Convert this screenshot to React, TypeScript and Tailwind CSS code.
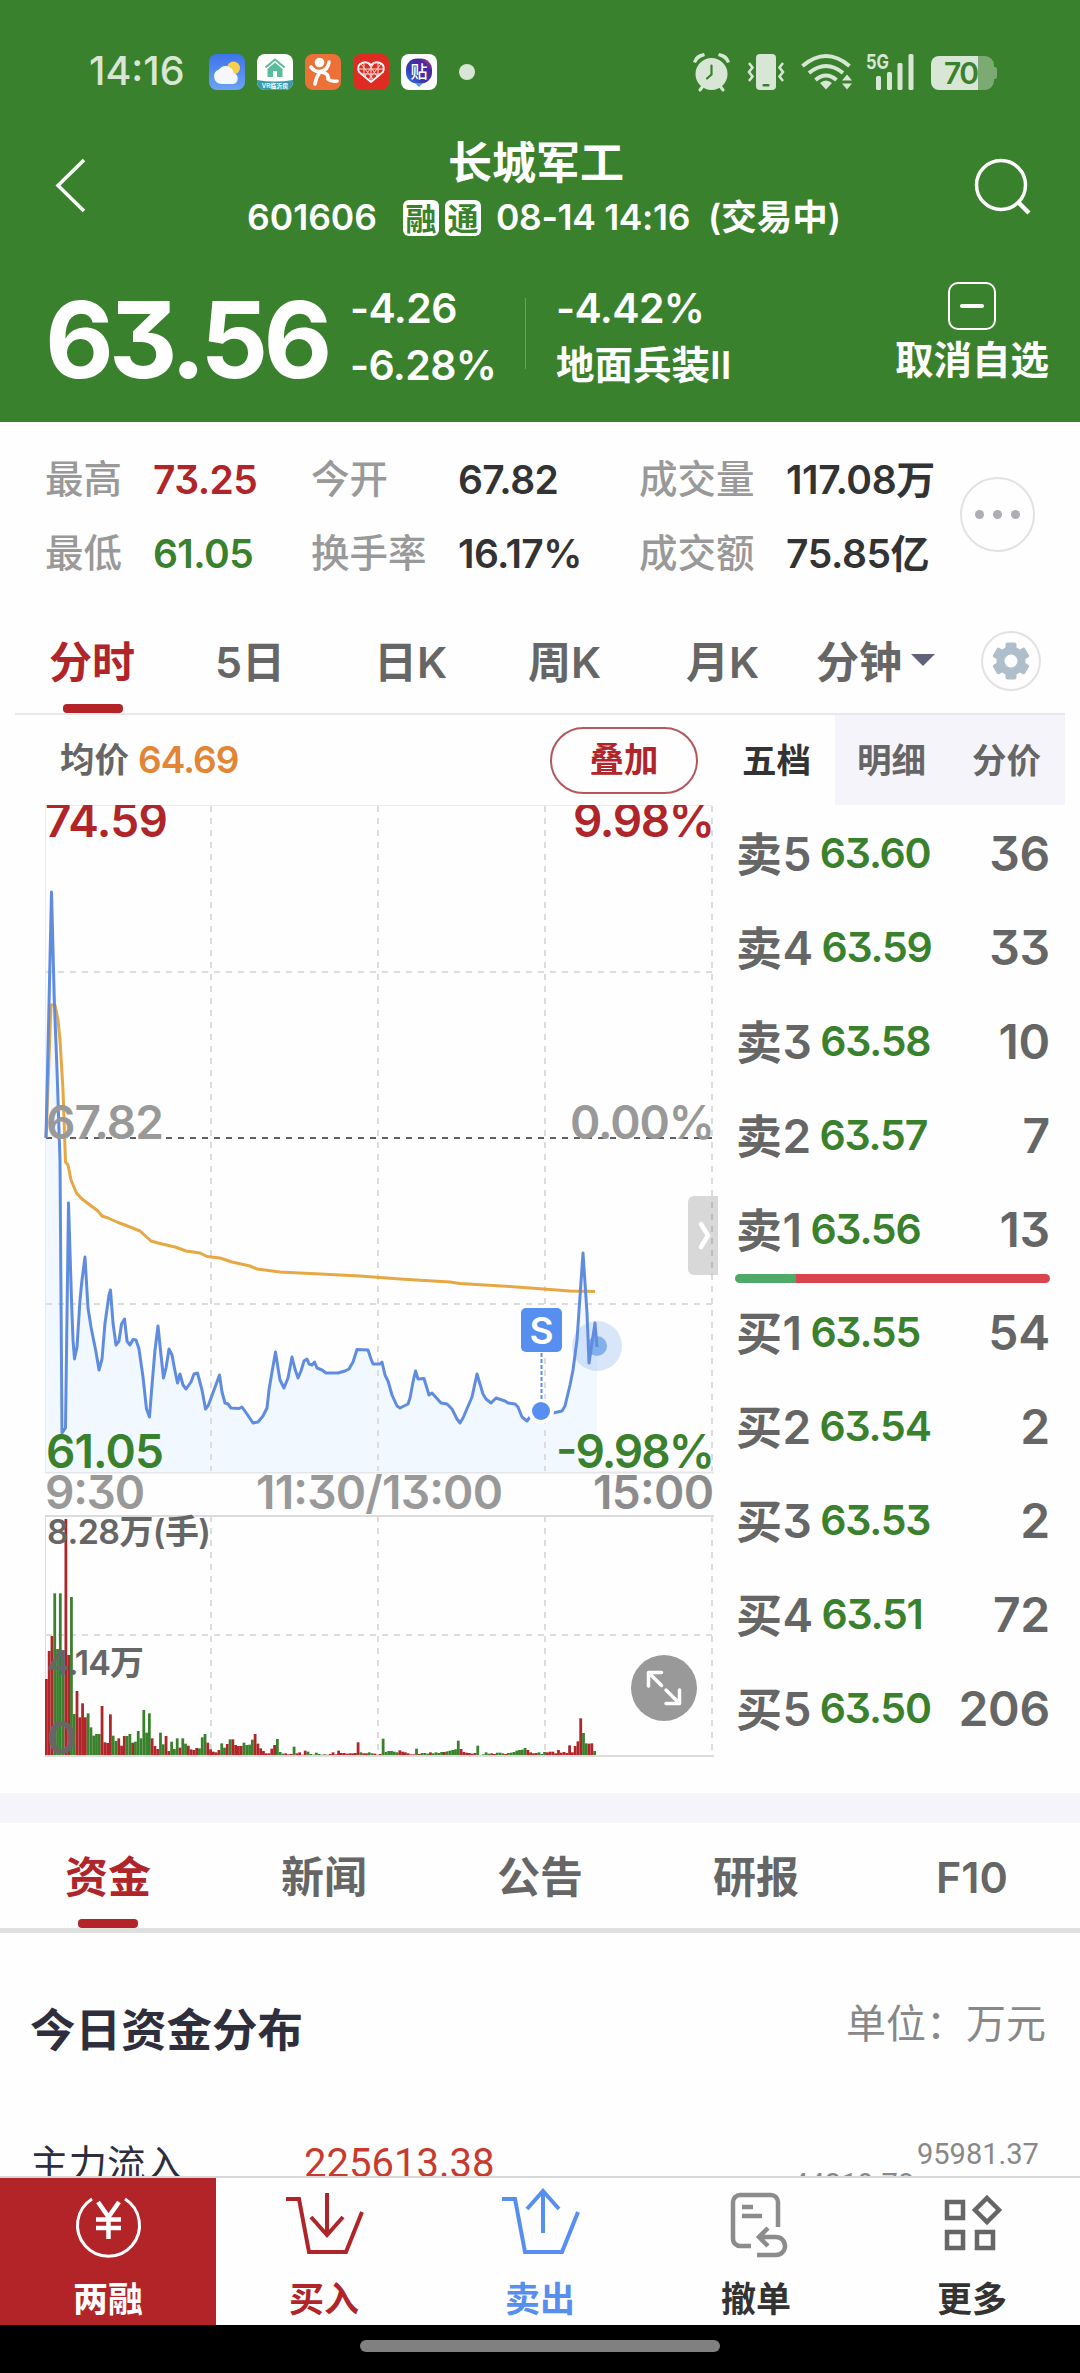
import React from 'react';

const AVG_LINE =
    '46,1138 51,1005 55,1005 58,1020 60,1040 63,1090 65.5,1162 68,1165 71,1180 76.5,1193 82,1199 90,1205 98,1211 102,1216 108,1218 117,1222 130,1227 140,1231 151,1241 158,1243 175,1247 186,1251 200,1253 207,1256.5 220,1258 232,1262 250,1266 257,1269 280,1272 320,1274 360,1276 400,1279 450,1282 460,1283.5 510,1286.5 530,1288 570,1291 595,1291.5';

const PRICE_LINE =
    '46,1138 51.5,892 54.3,1000 57,1070 60,1160 62,1433 65.5,1428 68.5,1203 71.5,1300 73,1340 74.5,1359 77,1347 80,1300 82,1280 85,1257 88,1308 91,1327 96,1352 99,1370 102,1359 105,1323 109,1295 110.5,1290 113,1323 116,1345 119,1341 121.5,1324 124.5,1319 127,1341 130,1345 133,1339.5 136,1340 139,1349 143,1377 146.5,1409 149.5,1417 152,1385 155,1350 158,1326 161,1355 163.5,1378 166,1368 169,1349 172,1355 175,1371 177.5,1383 180,1374 183,1385 186,1389 191,1382 194,1374 197.5,1373 202,1390 205.5,1409 208.5,1405 214,1390 219.5,1375 222,1392 225,1403 228,1404 231,1408 239,1408.5 242,1407 247,1414 253,1423 258,1422 263,1416 267,1408 269,1390 272,1372 275.5,1352 278,1368 280,1380 284,1388 288,1378 292,1357 295,1369 298,1378 301,1371 304,1361 307,1359 309,1364 312,1365 314.5,1362 317,1368 322,1370 326,1373 338,1373 345,1371 349,1369 353,1362 357,1349.5 368,1350 371,1359 373,1364 380,1364 382,1362 385,1375 388,1381 392,1395 397,1406 400,1408 408,1404 410,1398 413,1382 415.5,1371 418,1379 424,1378.5 429,1395 432,1393 441,1403 447,1404 452,1409 457,1419 460,1423 463,1418 472,1397 477,1374 483,1394 486,1399 491,1403 496,1398 505,1401 508,1403 515,1404 518,1407 522,1417 527,1421 530,1417 541,1411 553,1413 562,1411 565,1406 570,1385 573,1370 577,1340 583,1253 587,1313 589,1363 595,1323 597,1347';

// one value per minute, negative = falling minute (green)
const VOLUMES = [
    228, 312, 357, -485, -318, -485, -240, 708, 300, -474, -123, 192, 113, 155, 113, -125, -83, -58, -63, -63,
    147, 38, 36, 122, -58, -42, 50, 28, 57, -57, -63, 37, -40, -72, -50, -135, -67, -125, 50, 27,
    18, -67, -32, 57, 12, -40, -18, -50, 22, -50, -34, 28, 17, 15, 21, -20, -53, -63, 37, 17,
    10, 8, 15, -35, -22, 33, -47, 47, 30, 27, 27, -37, -30, -31, -46, 63, 34, 20, 12, 5,
    5, 19, 30, -48, -9, -4, 5, 2, 3, -25, 5, 8, 1, 13, -10, -3, -1, -7, -3, -1,
    2, -1, 3, 8, 2, 13, 6, 6, 4, 5, 5, 6, 38, -8, 5, 5, -8, -5, 4, 1,
    3, -49, -9, -12, -12, -10, -8, 14, 10, 8, 5, 2, 2, -19, 3, -6, -6, -4, 8, -5,
    -8, -6, -9, 9, -11, -13, -15, -17, -43, 18, 9, 7, 6, 4, 6, -28, 0, -2, -8, -4,
    5, 3, -7, -7, -5, 3, -6, -7, -9, -13, -15, -16, -21, 15, 8, 5, 6, -8, -3, -9,
    8, 10, 10, 5, 15, 7, 9, 6, 29, 8, 27, 41, 110, -66, -35, 34, 35, -12,
];

const STATS = [
    ['最高', '73.25', 'text-[#b0252a]', '今开', '67.82', '成交量', '117.08万'],
    ['最低', '61.05', 'text-[#3a812d]', '换手率', '16.17%', '成交额', '75.85亿'],
];

const SELLS = [
    ['卖5', '63.60', '36'],
    ['卖4', '63.59', '33'],
    ['卖3', '63.58', '10'],
    ['卖2', '63.57', '7'],
    ['卖1', '63.56', '13'],
];

const BUYS = [
    ['买1', '63.55', '54'],
    ['买2', '63.54', '2'],
    ['买3', '63.53', '2'],
    ['买4', '63.51', '72'],
    ['买5', '63.50', '206'],
];

const AppIcons = () => (
    <svg width="232" height="36" viewBox="0 0 232 36" className="shrink-0">
        <defs>
            <linearGradient id="sky" x1="0" y1="0" x2="0" y2="1">
                <stop offset="0" stopColor="#3d74ea" />
                <stop offset="1" stopColor="#6ea2f2" />
            </linearGradient>
            <linearGradient id="tie" x1="0" y1="1" x2="1" y2="0">
                <stop offset="0" stopColor="#2a8bea" />
                <stop offset="0.35" stopColor="#3a36b0" />
                <stop offset="0.75" stopColor="#4a2a9a" />
                <stop offset="1" stopColor="#f04a6a" />
            </linearGradient>
            <clipPath id="vr">
                <rect x="48" width="36" height="36" rx="8" />
            </clipPath>
        </defs>
        {/* weather */}
        <rect width="36" height="36" rx="8" fill="url(#sky)" />
        <circle cx="24.5" cy="14" r="6.5" fill="#f8cf4c" />
        <path d="M12 30a7.5 7.5 0 0 1-2-14.500a8 8 0 0 1 14.500 3.500a5.700 5.700 0 0 1 0 11z" fill="#f5f7fc" />
        {/* house */}
        <g clipPath="url(#vr)">
            <rect x="48" width="36" height="36" fill="#fff" />
            <path d="M48 26q18 3 36 0v10H48z" fill="#3a98a8" />
            <path d="M56.500 13.500 66 5.500l9.500 8" fill="none" stroke="#58bd98" strokeWidth="2" />
            <path d="M58.500 15 66 8.500l7.500 6.500V23h-5.500v-6h-4v6h-5.500z" fill="#58bd98" />
            <text x="66" y="34" fontSize="6" fill="#fff" textAnchor="middle">VR临沂房</text>
        </g>
        {/* runner */}
        <rect x="96" width="36" height="36" rx="8" fill="#ec7038" />
        <circle cx="110.500" cy="8.500" r="4.800" fill="#fff" />
        <path d="M102 13q3 5 9.500 4.500Q119 16 120 8M111 18q-4 5-5 12M112 18q8 1 7 7q3 3 9 2" fill="none" stroke="#fff" strokeWidth="3.600" strokeLinecap="round" />
        {/* heart knot */}
        <rect x="144" width="36" height="36" rx="8" fill="#df2c23" />
        <path d="M162 28 150 18q-2-5 1-8q6-4 11 1q5-5 11-1q3 3 1 8z" fill="none" stroke="#fff" strokeWidth="1.800" />
        <path d="M152 10l12 15M158 8l10 14M172 10l-12 15M166 8l-10 14M150 15h24M153 20h18M155 8v13M169 8v13M162 11v16" fill="none" stroke="#fbd9d4" strokeWidth="1" />
        {/* tie */}
        <rect x="192" width="36" height="36" rx="8" fill="#fff" />
        <rect x="197" y="4.500" width="26" height="25" rx="11" fill="url(#tie)" />
        <path d="M206 29l4 4 4-4z" fill="#3aa0f0" />
        <text x="210" y="23.500" fontSize="17" fontWeight="500" fill="#fff" textAnchor="middle">贴</text>
    </svg>
);

const SystemIcons = () => (
    <svg width="320" height="40" viewBox="690 52 320 40" className="shrink-0" fill="#d8e6d5">
        {/* alarm */}
        <circle cx="711.500" cy="74" r="16" />
        <path d="M693 62q2-8 11-9l1 3q-7 2-9 7zM730 62q-2-8-11-9l-1 3q7 2 9 7z" />
        <path d="M703 86l-3 4M720 86l3 4" stroke="#d8e6d5" strokeWidth="3" strokeLinecap="round" />
        <path d="M711.500 65.500v9l-4.500 4" fill="none" stroke="#3a812d" strokeWidth="2.200" strokeLinecap="round" />
        {/* vibrate */}
        <rect x="756" y="54" width="20" height="36" rx="4" />
        <rect x="762.500" y="84" width="7" height="2.500" rx="1" fill="#3a812d" />
        <path d="M749 63l3.500 4.500-3.500 4.500 3.500 4.500-3.500 4.500M783 63l-3.500 4.500 3.500 4.500-3.500 4.500 3.500 4.500" fill="none" stroke="#d8e6d5" strokeWidth="2.500" />
        {/* wifi */}
        <path d="M802.500 66q23.500-20 47 0M809 73q17-14 34 0M815.500 80q10.500-9 21 0" fill="none" stroke="#d8e6d5" strokeWidth="4" />
        <path d="M820 83q6-5 12 0l-6 6.500zM842 80.500l5-6 5 6zM842 83.500h10l-5 6z" />
        {/* signal */}
        <text x="866" y="68.500" fontSize="20" fontWeight="700" textLength="23" lengthAdjust="spacingAndGlyphs">5G</text>
        <rect x="876" y="76" width="5" height="14" rx="1.500" />
        <rect x="887" y="72" width="5" height="18" rx="1.500" />
        <rect x="897.500" y="63" width="5" height="27" rx="1.500" />
        <rect x="908.500" y="54" width="5" height="36" rx="1.500" />
        {/* battery */}
        <path d="M978 56h7a9 9 0 0 1 9 9v2h1q2 0 2 3v5q0 4-2 4h-1v2a9 9 0 0 1-9 9h-7z" fill="#7caa73" />
        <path d="M978 56h-39a8 8 0 0 0-8 8v18a8 8 0 0 0 8 8h39z" />
        <text x="944" y="84" fontSize="30" fontWeight="600" fill="#3a812d" textLength="35">70</text>
    </svg>
);

const Grid = ({ top, bottom }: { top: number; bottom: number }) => (
    <>
        {[211, 378, 545, 712].map((x) => (
            <line key={x} x1={x} x2={x} y1={top} y2={bottom} stroke="#dcdcdc" strokeWidth="2" strokeDasharray="6 6" />
        ))}
    </>
);

const Chart = () => (
    <svg width="720" height="960" viewBox="0 804 720 960" className="block">
        <path d="M45.500 1472V805.500H712" fill="none" stroke="#ebebeb" strokeWidth="1" />
        <path d="M45 1472.500H714" stroke="#e4e6ea" strokeWidth="2" />
        <polygon points={`46,1472 ${PRICE_LINE} 597,1472`} fill="#f2f8ff" />
        <Grid top={806} bottom={1471} />
        <path d="M46 972H712M46 1304H712" stroke="#dcdcdc" strokeWidth="2" strokeDasharray="6 6" />
        <path d="M46 1138H712" stroke="#606060" strokeWidth="2" strokeDasharray="6 6" />
        <polyline points={AVG_LINE} fill="none" stroke="#e7a843" strokeWidth="3" strokeLinejoin="round" />
        <circle cx="597" cy="1346" r="25" fill="#6aa1ea" fillOpacity="0.25" />
        <circle cx="597" cy="1346" r="10" fill="#83b0ec" />
        <polyline points={PRICE_LINE} fill="none" stroke="#608ce0" strokeWidth="3" strokeLinejoin="round" />

        {/* sell marker */}
        <circle cx="541" cy="1411" r="13" fill="#fff" />
        <circle cx="541" cy="1411" r="9" fill="#568ff0" />
        <path d="M541.500 1353v46" stroke="#568ff0" strokeWidth="2" strokeDasharray="4 2" />
        <rect x="521" y="1308" width="41" height="44" rx="5" fill="#568ff0" />
        <text x="541.500" y="1344" fontSize="37" fontWeight="600" fill="#fff" textAnchor="middle">S</text>

        {/* axis labels */}
        <g fontSize="46" fontWeight="600">
            <svg x="0" y="805" width="720" height="60" viewBox="0 805 720 60">
                <text x="45" y="837" fill="#b0252a" textLength="123">74.59</text>
                <text x="573" y="837" fill="#b0252a" textLength="142">9.98%</text>
            </svg>
            <text x="46" y="1139" fill="#999" textLength="118">67.82</text>
            <text x="570" y="1139" fill="#999" textLength="145">0.00%</text>
            <text x="46" y="1468" fill="#3a812d" textLength="118">61.05</text>
            <text x="556" y="1468" fill="#3a812d" textLength="159">-9.98%</text>
            <text x="45" y="1509" fill="#999" textLength="100">9:30</text>
            <text x="256" y="1509" fill="#999" textLength="247">11:30/13:00</text>
            <text x="593" y="1509" fill="#8c8c8c" textLength="121">15:00</text>
        </g>

        {/* side handle */}
        <path d="M718 1196h-24a6 6 0 0 0-6 6v67a6 6 0 0 0 6 6h24z" fill="#000" fillOpacity="0.150" />
        <path d="M701 1224l7 11.500-7 11.500" fill="none" stroke="#fff" strokeWidth="4.500" strokeLinecap="round" />

        {/* volume */}
        <path d="M45.500 1516V1756" stroke="#dcdcdc" strokeWidth="1" />
        <path d="M45 1516H714M45 1756H714" stroke="#dcdcdc" strokeWidth="2" />
        <Grid top={1516} bottom={1755} />
        <path d="M46 1635H712" stroke="#dcdcdc" strokeWidth="2" strokeDasharray="6 6" />
        {VOLUMES.map((v, i) => (
            <rect
                key={i}
                x={45 + i * 2.783}
                y={1755 - Math.abs(v) / 3}
                width="2.783"
                height={Math.abs(v) / 3}
                fill={v < 0 ? '#3a812d' : '#b02529'}
            />
        ))}
        <g fill="#666" fontSize="34" fontWeight="600">
            <text x="47" y="1543.500" textLength="164">8.28万(手)</text>
            <text x="47" y="1674.500" textLength="97">4.14万</text>
            <text x="47" y="1754" fontSize="45">0</text>
        </g>
        <circle cx="664" cy="1688" r="33" fill="#999" />
        <path d="M661.500 1685.500 648.500 1672.500M648.500 1686v-13.500h13M666 1690l13.500 13.500M679.500 1690v13.500h-13.500" fill="none" stroke="#fff" strokeWidth="3.500" strokeLinecap="round" strokeLinejoin="round" />
    </svg>
);

const BookRow = ({ row }: { row: string[] }) => (
    <div className="flex h-[94px] items-center text-[#666]">
        <span className="text-[46px] tracking-[0.01em]">{row[0]}</span>
        <span className="ml-[8px] text-[41px] tracking-[-0.03em] text-[#3a812d]">{row[1]}</span>
        <span className="ml-auto text-[48px] tracking-[-0.005em]">{row[2]}</span>
    </div>
);

const NAV = [
    {
        label: '两融',
        style: 'bg-[#b22428] text-white',
        labelStyle: '',
        icon: (
            <g strokeWidth="3">
                <path d="M17 9A31 31 0 1 0 50 9" />
                <path d="M23 12l10.500 15L44 12M33.500 27v22M21 29.500h25M21 38h25" strokeWidth="4.500" />
            </g>
        ),
    },
    {
        label: '买入',
        style: 'text-[#b02529]',
        labelStyle: '',
        icon: <path d="M-5 9H8L18 62H55L71 22M36 3V45M20 27L36 45L52 27" strokeWidth="4" />,
    },
    {
        label: '卖出',
        style: 'text-[#568ff0]',
        labelStyle: '',
        icon: <path d="M-5 9H8L18 62H55L71 22M36 43V2M20 19L36 1L52 19" strokeWidth="4" />,
    },
    {
        label: '撤单',
        style: 'text-[#8c8c8c]',
        labelStyle: 'text-[#333]',
        icon: (
            <path
                d="M55 37V12a7 7 0 0 0-7-7H17a7 7 0 0 0-7 7V49a7 7 0 0 0 7 7H28M19 17H30M19 26H39M45 38L36 47L45 56M37 47H53a9 9 0 0 1 9 9a9 9 0 0 1-9 9H34"
                strokeWidth="4.500"
            />
        ),
    },
    {
        label: '更多',
        style: 'text-[#666]',
        labelStyle: 'text-[#333]',
        icon: (
            <path
                d="M8 12h16v16H8zM8 42h16v16H8zM38 42h16v16H38zM48 8L60 20L48 32L36 20z"
                strokeWidth="4.500"
            />
        ),
    },
];

const App: React.FC = () => {
    return (
        <div className="flex h-[2373px] w-[1080px] flex-col overflow-hidden bg-[#fefefe] font-['Inter','Noto_Sans_CJK_SC',sans-serif] font-semibold whitespace-nowrap [font-feature-settings:'cv09']">
            <header className="h-[422px] shrink-0 bg-[#3a812d] text-white">
                {/* Status bar */}
                <div className="flex h-[126px] items-center pt-[18px] pl-[89px] text-[#d8e6d5]">
                    <span className="w-[120px] text-[39.5px] leading-none font-medium">14:16</span>
                    <AppIcons />
                    <span className="ml-[18px] h-4 w-4 rounded-full bg-[#d8e6d5]"></span>
                    <div className="ml-[215px]">
                        <SystemIcons />
                    </div>
                </div>

                {/* Title bar */}
                <div className="flex h-[120px] items-center pl-[54px]">
                    <svg width="40" height="56" viewBox="0 0 40 56" fill="none" stroke="#fff" strokeWidth="3.500">
                        <path d="M30 2 4 27.500 30 53" />
                    </svg>
                    <div className="ml-[153px] w-[600px] pt-[10px]">
                        <h1 className="pl-[201px] text-[44px] leading-[54px] font-bold">长城军工</h1>
                        <div className="flex h-[56px] items-center text-[35.5px] leading-none">
                            <span className="w-[156px]">601606</span>
                            <span className="mr-1.5 flex h-9 w-9 items-center justify-center rounded-md bg-white text-[31px] text-[#3a812d]">融</span>
                            <span className="flex h-9 w-9 items-center justify-center rounded-md bg-white text-[31px] text-[#3a812d]">通</span>
                            <span className="ml-[15px] w-[212px] tracking-[-0.01em]">08-14 14:16</span>
                            <span>(交易中)</span>
                        </div>
                    </div>
                    <svg className="ml-[127px]" width="58" height="58" viewBox="0 0 58 58" fill="none" stroke="#fff" strokeWidth="3.500">
                        <circle cx="27" cy="28" r="24.500" />
                        <path d="M45 46l10 10" strokeWidth="4.500" />
                    </svg>
                </div>

                {/* Quote */}
                <div className="flex pl-[45px]">
                    <div className="w-[305px] pt-[41px] text-[106px] leading-[106px] font-bold tracking-[-0.045em]">63.56</div>
                    <div className="w-[175px] pt-[34px] text-[41px] leading-[57px] tracking-[-0.015em]">
                        <p>-4.26</p>
                        <p>-6.28%</p>
                    </div>
                    <div className="mt-[52px] h-[71px] w-px bg-white/25"></div>
                    <div className="ml-[30px] w-[339px] pt-[34px] text-[41px] leading-[57px] tracking-[-0.015em]">
                        <p>-4.42%</p>
                        <p className="text-[38.5px] tracking-normal">地面兵装II</p>
                    </div>
                    <div className="flex flex-col items-center pt-[36px]">
                        <span className="flex h-12 w-12 items-center justify-center rounded-[10px] border-2 border-white">
                            <span className="h-1 w-6 rounded bg-white"></span>
                        </span>
                        <span className="mt-[5px] text-[38.5px] leading-[50px]">取消自选</span>
                    </div>
                </div>
            </header>

            {/* Stats */}
            <section className="flex h-[190px] shrink-0 pt-[21px] pl-[45px]">
                <div className="w-[915px]">
                    {STATS.map((s) => (
                        <div key={s[0]} className="grid h-[74px] grid-cols-[108px_158px_147px_181px_147px_1fr] items-center text-[38.5px] text-[#333]">
                            <span className="font-medium text-[#999]">{s[0]}</span>
                            <span className={`text-[39px] tracking-[-0.015em] ${s[2]}`}>{s[1]}</span>
                            <span className="font-medium text-[#999]">{s[3]}</span>
                            <span className="text-[39px] tracking-[-0.015em]">{s[4]}</span>
                            <span className="font-medium text-[#999]">{s[5]}</span>
                            <span className="text-[39px] tracking-[-0.01em]">{s[6]}</span>
                        </div>
                    ))}
                </div>
                <div className="mt-[34px] flex h-[75px] w-[75px] items-center justify-center gap-[9px] rounded-full border-2 border-[#e2e2e4]">
                    <span className="h-[9px] w-[9px] rounded-full bg-[#adadb3]"></span>
                    <span className="h-[9px] w-[9px] rounded-full bg-[#adadb3]"></span>
                    <span className="h-[9px] w-[9px] rounded-full bg-[#adadb3]"></span>
                </div>
            </section>

            {/* Period tabs */}
            <nav className="mx-[15px] flex h-[103px] shrink-0 border-b-2 border-[#e8e8ea] text-[43px] leading-[100px] text-[#666]">
                <div className="flex w-[200px] flex-col pl-[34px]">
                    <span className="h-[92px] font-bold text-[#b0252a]">分时</span>
                    <span className="ml-[14px] h-[9px] w-[60px] rounded-[4px] bg-[#b22428]"></span>
                </div>
                <span className="w-[159px]">5日</span>
                <span className="w-[154px]">日K</span>
                <span className="w-[158px]">周K</span>
                <span className="w-[130px]">月K</span>
                <span className="w-[95px]">分钟</span>
                <span className="mt-[42px] h-3 w-6 bg-[#5f6278] [clip-path:polygon(0_0,100%_0,50%_100%)]"></span>
                <span className="mt-[19px] ml-[46px] flex h-[60px] w-[60px] items-center justify-center rounded-full border-2 border-[#e2e2e4]">
                    <svg width="38" height="38" viewBox="-19 -19 38 38" fill="#afbecb">
                        {[0, 60, 120].map((a) => (
                            <rect key={a} x="-5.500" y="-18.500" width="11" height="37" rx="2" transform={`rotate(${a})`} />
                        ))}
                        <circle r="14.500" />
                        <circle r="6.500" fill="#fefefe" />
                    </svg>
                </span>
            </nav>

            {/* Chart and order book */}
            <section className="flex h-[1078px] shrink-0">
                <div className="w-[735px]">
                    <div className="flex h-[89px] items-center pl-[60px] text-[34.5px] text-[#666]">
                        <span>均价</span>
                        <span className="ml-[9px] text-[37px] tracking-[-0.025em] text-[#e28534]">64.69</span>
                        <span className="mt-px mr-[37px] ml-auto flex h-[67px] w-[148px] items-center justify-center rounded-full border-2 border-[#b4585b] text-[#b0252a]">叠加</span>
                    </div>
                    <Chart />
                </div>
                <div className="w-[345px]">
                    <div className="flex h-[90px] text-[34.5px] leading-[92px]">
                        <span className="w-[100px] pl-[7px] font-bold text-[#333]">五档</span>
                        <span className="w-[115px] bg-[#f5f4fa] pl-[22px] text-[#666]">明细</span>
                        <span className="w-[115px] bg-[#f5f4fa] pl-[22px] text-[#666]">分价</span>
                    </div>
                    <div className="w-[315px] pt-[2px]">
                        <div className="pl-[1px]">
                            {SELLS.map((row) => <BookRow key={row[0]} row={row} />)}
                        </div>
                        <div className="-mt-[3px] flex h-[9px] overflow-hidden rounded-full">
                            <span className="w-[61px] bg-[#4fa969]"></span>
                            <span className="flex-1 bg-[#d9454f]"></span>
                        </div>
                        <div className="pt-[3px] pl-[1px]">
                            {BUYS.map((row) => <BookRow key={row[0]} row={row} />)}
                        </div>
                    </div>
                </div>
            </section>

            <div className="h-[30px] shrink-0 bg-[#f5f4fa]"></div>

            {/* Info tabs */}
            <nav className="grid h-[110px] shrink-0 grid-cols-5 border-b-[5px] border-[#e0e0e0] text-center text-[43px] leading-[108px] text-[#666]">
                <div className="flex flex-col items-center">
                    <span className="h-[96px] font-bold text-[#b0252a]">资金</span>
                    <span className="h-[9px] w-[60px] rounded-[4px] bg-[#b22428]"></span>
                </div>
                <span>新闻</span>
                <span>公告</span>
                <span>研报</span>
                <span>F10</span>
            </nav>

            {/* Fund flow */}
            <section className="h-[243px] shrink-0 overflow-hidden pr-[34px] pl-[30px]">
                <div className="flex h-[196px] justify-between">
                    <h2 className="text-[45.5px] leading-[196px] font-bold text-[#2e2e3c]">今日资金分布</h2>
                    <span className="text-[40px] leading-[182px] font-normal text-[#888]">单位：万元</span>
                </div>
                <div className="flex font-normal">
                    <span className="w-[274px] text-[38.5px] leading-[70px] text-[#2e2e3c]">主力流入</span>
                    <span className="font-[Roboto] text-[40px] leading-[70px] text-[#c83a30]">225613.38</span>
                    <div className="ml-auto flex font-[Roboto] text-[29px] text-[#888]">
                        <span className="pt-[41px] leading-[28px]">44219.78</span>
                        <div className="-mt-1 w-[132px] pl-[3px]">
                            <span className="block pt-[5px] leading-[48px]">95981.37</span>
                            <span className="ml-[32px] block h-5 w-[58px] bg-[#dda395]"></span>
                        </div>
                    </div>
                </div>
            </section>

            {/* Bottom actions */}
            <nav className="grid h-[149px] shrink-0 grid-cols-5 border-t-2 border-[#d8d8d8] text-[35px]">
                {NAV.map((item) => (
                    <div key={item.label} className={`flex flex-col items-center pt-3 ${item.style}`}>
                        <svg width="66" height="72" viewBox="0 0 66 72" className="overflow-visible" fill="none" stroke="currentColor">
                            {item.icon}
                        </svg>
                        <span className={`mt-[15px] leading-[44px] font-bold ${item.labelStyle}`}>{item.label}</span>
                    </div>
                ))}
            </nav>
            <div className="flex h-12 shrink-0 justify-center bg-black pt-[15px]">
                <span className="h-3 w-[360px] rounded-[6px] bg-[#808080]"></span>
            </div>
        </div>
    );
};

export default App;
